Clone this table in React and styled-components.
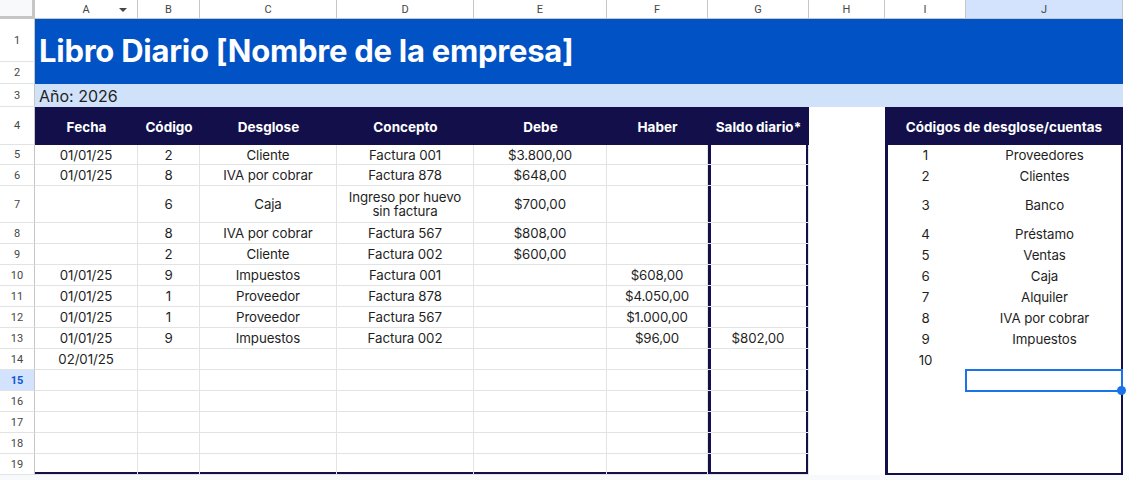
import React from "react";
import styled, { createGlobalStyle, css } from "styled-components";

const NAVY = "#130f4b";
const GRID = "#e2e3e3";
const HEAD_LINE = "#c4c7c5";

const COLS = [35, 103, 62, 137, 137, 133, 101, 101, 76, 81, 157];
const ROWS = [19, 43, 22, 23, 38, 20, 21, 37, 21, 21, 21, 21, 21, 21, 21, 21, 21, 21, 21, 21];
const LETTERS = ["A", "B", "C", "D", "E", "F", "G", "H", "I", "J"];

const entries = [
  ["01/01/25", "2", "Cliente", "Factura 001", "$3.800,00", "", ""],
  ["01/01/25", "8", "IVA por cobrar", "Factura 878", "$648,00", "", ""],
  ["", "6", "Caja", "Ingreso por huevo sin factura", "$700,00", "", ""],
  ["", "8", "IVA por cobrar", "Factura 567", "$808,00", "", ""],
  ["", "2", "Cliente", "Factura 002", "$600,00", "", ""],
  ["01/01/25", "9", "Impuestos", "Factura 001", "", "$608,00", ""],
  ["01/01/25", "1", "Proveedor", "Factura 878", "", "$4.050,00", ""],
  ["01/01/25", "1", "Proveedor", "Factura 567", "", "$1.000,00", ""],
  ["01/01/25", "9", "Impuestos", "Factura 002", "", "$96,00", "$802,00"],
  ["02/01/25", "", "", "", "", "", ""],
  ["", "", "", "", "", "", ""],
  ["", "", "", "", "", "", ""],
  ["", "", "", "", "", "", ""],
  ["", "", "", "", "", "", ""],
  ["", "", "", "", "", "", ""],
];

const codes = [
  ["1", "Proveedores"],
  ["2", "Clientes"],
  ["3", "Banco"],
  ["4", "Préstamo"],
  ["5", "Ventas"],
  ["6", "Caja"],
  ["7", "Alquiler"],
  ["8", "IVA por cobrar"],
  ["9", "Impuestos"],
  ["10", ""],
  ["", ""],
  ["", ""],
  ["", ""],
  ["", ""],
  ["", ""],
];

const headers = ["Fecha", "Código", "Desglose", "Concepto", "Debe", "Haber", "Saldo diario*"];

const GlobalStyle = createGlobalStyle`
  html, body {
    margin: 0;
    padding: 0;
    background: #ffffff;
  }
  body {
    font-family: "Inter", "Liberation Sans", sans-serif;
    color: #1f1f1f;
  }
`;

const Page = styled.div`
  width: 1129px;
  height: 480px;
  overflow: hidden;
  background: #f8f9fa;
`;

const Sheet = styled.div`
  display: grid;
  grid-template-columns: ${COLS.map((c) => c + "px").join(" ")} 6px;
  grid-template-rows: ${ROWS.map((r) => r + "px").join(" ")};
  background: #ffffff;
  width: 1129px;
`;

const Corner = styled.div`
  background: #f8f9fa;
  border-right: 3px solid ${HEAD_LINE};
  border-bottom: 3px solid ${HEAD_LINE};
  box-sizing: border-box;
`;

const ColHead = styled.div`
  position: relative;
  box-sizing: border-box;
  display: flex;
  align-items: center;
  justify-content: center;
  font-family: "Roboto", "Liberation Sans", sans-serif;
  font-size: 11px;
  color: #444746;
  border-right: 1px solid ${HEAD_LINE};
  border-bottom: 1px solid ${HEAD_LINE};
  background: ${(p) => (p.$active ? "#d3e3fd" : "#ffffff")};
  padding-top: 1px;
`;

const DropArrow = styled.span`
  position: absolute;
  right: 10px;
  top: 8px;
  width: 0;
  height: 0;
  border-left: 4px solid transparent;
  border-right: 4px solid transparent;
  border-top: 4px solid #444746;
`;

const RowHead = styled.div`
  box-sizing: border-box;
  display: flex;
  align-items: center;
  justify-content: center;
  font-family: "Roboto", "Liberation Sans", sans-serif;
  font-size: 11px;
  color: #444746;
  border-right: 1px solid ${HEAD_LINE};
  border-bottom: 1px solid ${GRID};
  ${(p) =>
    p.$active &&
    css`
      background: #d3e3fd;
      color: #0b57d0;
      font-weight: 700;
    `}
`;

const TitleCell = styled.div`
  grid-column: span 10;
  grid-row: span 2;
  background: #0052c5;
  color: #ffffff;
  display: flex;
  align-items: center;
  padding-left: 4px;
  padding-bottom: 2px;
  font-size: 31px;
  font-weight: 700;
  letter-spacing: -0.25px;
`;

const YearCell = styled.div`
  grid-column: span 10;
  background: #cfe2fa;
  display: flex;
  align-items: center;
  padding-left: 4px;
  font-size: 16px;
  color: #1f1f1f;
`;

const HeadCell = styled.div`
  grid-column: span ${(p) => p.$span || 1};
  background: ${NAVY};
  color: #ffffff;
  display: flex;
  align-items: center;
  justify-content: center;
  font-size: 13.5px;
  font-weight: 700;
  padding-top: 1px;
  white-space: nowrap;
`;

const Blank = styled.div`
  background: #ffffff;
`;

const edgeShadow = (edges) => {
  const list = [];
  if (edges.left) list.push(`inset ${edges.left}px 0 0 ${NAVY}`);
  if (edges.right) list.push(`inset -${edges.right}px 0 0 ${NAVY}`);
  if (edges.bottom) list.push(`inset 0 -${edges.bottom}px 0 ${NAVY}`);
  return list.length ? list.join(", ") : "none";
};

const Cell = styled.div`
  position: relative;
  box-sizing: border-box;
  display: flex;
  align-items: center;
  justify-content: center;
  text-align: center;
  font-size: 13.3px;
  line-height: 14px;
  color: #1f1f1f;
  padding: 0 6px;
  letter-spacing: -0.1px;
  border-right: ${(p) => (p.$lines ? `1px solid ${GRID}` : "none")};
  border-bottom: ${(p) => (p.$lines ? `1px solid ${GRID}` : "none")};
  box-shadow: ${(p) => edgeShadow(p.$edges || {})};
`;

const Selection = styled.div`
  position: absolute;
  z-index: 2;
  inset: -1px 0 -1px -1px;
  border: 2px solid #1a73e8;
  box-sizing: border-box;
  pointer-events: none;
`;

const Handle = styled.div`
  position: absolute;
  right: -5px;
  bottom: -5px;
  width: 9px;
  height: 9px;
  border-radius: 50%;
  background: #1a73e8;
`;

export default function App() {
  const last = entries.length - 1;
  return (
    <Page>
      <GlobalStyle />
      <Sheet>
        <Corner />
        {LETTERS.map((l) => (
          <ColHead key={l} $active={l === "J"}>
            {l}
            {l === "A" && <DropArrow />}
          </ColHead>
        ))}
        <Blank />

        <RowHead>1</RowHead>
        <TitleCell>Libro Diario [Nombre de la empresa]</TitleCell>
        <Blank />
        <RowHead>2</RowHead>
        <Blank />

        <RowHead>3</RowHead>
        <YearCell>Año: 2026</YearCell>
        <Blank />

        <RowHead>4</RowHead>
        {headers.map((h) => (
          <HeadCell key={h}>{h}</HeadCell>
        ))}
        <Blank />
        <HeadCell $span={2}>Códigos de desglose/cuentas</HeadCell>
        <Blank />

        {entries.map((row, i) => {
          const n = i + 5;
          const bottom = i === last ? 2 : 0;
          return (
            <React.Fragment key={n}>
              <RowHead $active={n === 15}>{n}</RowHead>
              {row.map((value, c) => (
                <Cell
                  key={c}
                  $lines
                  $edges={
                    c === 6
                      ? { left: 3, right: 2, bottom }
                      : { bottom }
                  }
                >
                  {value}
                </Cell>
              ))}
              <Cell />
              <Cell $edges={{ left: 3, bottom }}>{codes[i][0]}</Cell>
              <Cell $edges={{ right: 2, bottom }}>
                {codes[i][1]}
                {n === 15 && (
                  <Selection>
                    <Handle />
                  </Selection>
                )}
              </Cell>
              <Blank />
            </React.Fragment>
          );
        })}
      </Sheet>
    </Page>
  );
}
